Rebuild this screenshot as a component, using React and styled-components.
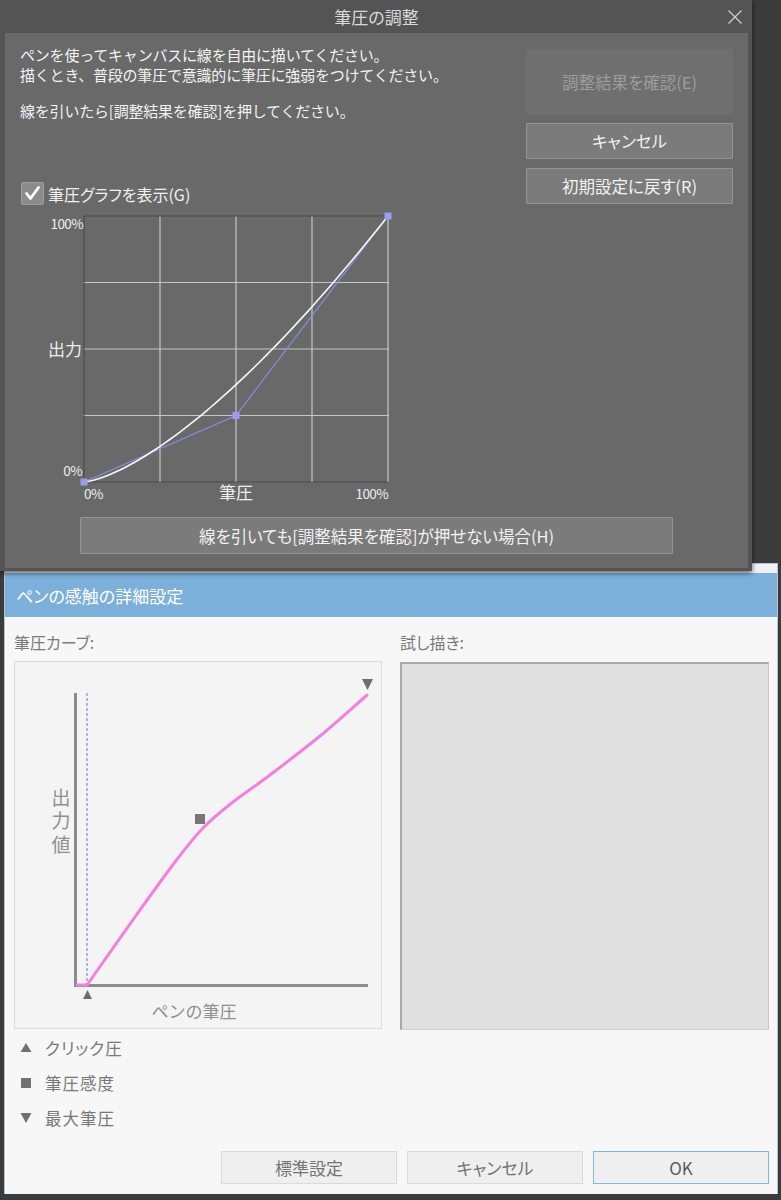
import React from "react";
import styled, { createGlobalStyle } from "styled-components";

const GlobalStyle = createGlobalStyle`
  html, body { margin: 0; padding: 0; background: #3b3b3b; }
  body { font-family: "Noto Sans CJK JP", "Noto Sans", sans-serif; }
  * { box-sizing: border-box; }
`;

const Desktop = styled.div`
  position: relative;
  width: 781px;
  height: 1200px;
  overflow: hidden;
  background: #3b3b3b;
  font-family: "Noto Sans CJK JP", "Noto Sans", sans-serif;
`;

/* ---------- dark "筆圧の調整" dialog ---------- */

const AdjustDialog = styled.section`
  position: absolute;
  left: 0;
  top: 0;
  z-index: 2;
  width: 752px;
  height: 571px;
  display: flex;
  flex-direction: column;
  padding: 0 4px 3px 5px;
  background: #545454;
  box-shadow: 0 2px 5px rgba(0, 0, 0, 0.6);
`;

const DarkTitleBar = styled.header`
  height: 33px;
  flex: none;
  display: grid;
  grid-template-columns: 1fr auto 1fr;
  align-items: center;
  color: #d9d9d9;
  font-size: 17px;
  font-feature-settings: "palt";
`;

const TitleText = styled.span`
  grid-column: 2;
`;

const CloseButton = styled.span`
  grid-column: 3;
  justify-self: end;
  margin-right: 5px;
  width: 16px;
  height: 16px;
  display: flex;
`;

const DarkBody = styled.div`
  flex: 1;
  background: #696969;
  display: grid;
  grid-template-columns: 1fr 207px;
  padding: 12px 15px 14px 15px;
`;

const LeftColumn = styled.div`
  display: flex;
  flex-direction: column;
`;

const Instructions = styled.div`
  color: #f3f3f3;
  font-size: 15px;
  line-height: 20px;
  letter-spacing: -0.2px;
  p { margin: 0; }
  p + p { margin-top: 16px; }
`;

const CheckRow = styled.label`
  margin-top: 61px;
  display: flex;
  align-items: center;
  gap: 4px;
  height: 23px;
  color: #f0f0f0;
  font-size: 16px;
  font-feature-settings: "palt";
`;

const CheckBox = styled.span`
  width: 23px;
  height: 23px;
  margin-left: 1px;
  border-radius: 2px;
  background: #8b8b8b;
  border: 1px solid #a0a0a0;
  display: flex;
  align-items: center;
  justify-content: center;
`;

const GraphSvg = styled.svg`
  display: block;
  margin-top: 5px;
  font-family: "Noto Sans CJK JP", "Noto Sans", sans-serif;
`;

const RightColumn = styled.div`
  display: flex;
  flex-direction: column;
  gap: 9px;
  padding-top: 4px;
`;

const DarkButton = styled.button`
  height: ${(p) => p.$h || 36}px;
  width: ${(p) => (p.$w ? `${p.$w}px` : "100%")};
  border-radius: 1px;
  border: 1px solid ${(p) => (p.disabled ? "#6f6f6f" : "#959595")};
  background: ${(p) => (p.disabled ? "#6f6f6f" : "#7b7b7b")};
  color: ${(p) => (p.disabled ? "#9d9d9d" : "#f2f2f2")};
  font-family: inherit;
  font-size: 16.5px;
  font-feature-settings: "palt";
  padding: 0;
`;

const WideRow = styled.div`
  grid-column: 1 / -1;
  display: flex;
  justify-content: center;
  margin-top: 12px;
`;

/* ---------- light "ペンの感触の詳細設定" window ---------- */

const DetailWindow = styled.section`
  position: absolute;
  left: 4px;
  top: 563px;
  z-index: 1;
  width: 774px;
  height: 631px;
  display: flex;
  flex-direction: column;
  padding-top: 9px;
  background: #eef2f6;
  border: 1px solid #b3c3d3;
`;

const LightTitleBar = styled.header`
  height: 44px;
  flex: none;
  display: flex;
  align-items: center;
  padding-left: 11px;
  background: #7cb0da;
  color: #ffffff;
  font-size: 17px;
  font-feature-settings: "palt";
`;

const LightBody = styled.div`
  flex: 1;
  background: #f7f7f7;
  display: grid;
  grid-template-columns: 368px 369px;
  column-gap: 18px;
  padding: 15px 8px 10px 9px;
  align-content: start;
`;

const SectionLabel = styled.div`
  height: 20px;
  line-height: 20px;
  margin-bottom: 9px;
  color: #7a7a7a;
  font-size: 16px;
  font-feature-settings: "palt";
`;

const CurvePanel = styled.div`
  width: 368px;
  height: 368px;
  border: 1px solid #dcdcdc;
  background: #f4f4f4;
`;

const CurveSvg = styled.svg`
  display: block;
  font-family: "Noto Sans CJK JP", "Noto Sans", sans-serif;
`;

const VerticalLabel = styled.text`
  writing-mode: vertical-rl;
  letter-spacing: 4.5px;
`;

const TrialPanel = styled.div`
  width: 369px;
  height: 368px;
  margin-top: 1px;
  background: #e0e0e0;
  border-style: solid;
  border-width: 2px 1px 1px 2px;
  border-color: #a9a9a9 #c8c8c8 #d3d3d3 #a9a9a9;
`;

const Legend = styled.ul`
  grid-column: 1 / -1;
  list-style: none;
  margin: 0;
  padding: 0;
`;

const LegendItem = styled.li`
  height: 35px;
  display: flex;
  align-items: center;
  gap: 13px;
  padding-left: 6px;
  color: #777777;
  font-size: 16.5px;
  letter-spacing: 1px;
  font-feature-settings: "palt";
`;

const LegendIcon = styled.svg`
  flex: none;
  display: block;
`;

const ButtonBar = styled.div`
  grid-column: 1 / -1;
  margin-top: 16px;
  display: flex;
  justify-content: flex-end;
  gap: 10px;
`;

const LightButton = styled.button`
  width: 176px;
  height: 33px;
  padding: 0;
  border: 1px solid ${(p) => (p.$primary ? "#84b5e4" : "#dadada")};
  background: #efefef;
  color: ${(p) => (p.$primary ? "#5c5c5c" : "#737373")};
  font-family: inherit;
  font-size: 17px;
  font-feature-settings: "palt";
`;

/* ---------- drawings ---------- */

const CloseIcon = () => (
  <svg width="16" height="16" viewBox="0 0 16 16">
    <path d="M1.5 1.5 L14.5 14.5 M14.5 1.5 L1.5 14.5" stroke="#cdcdcd" strokeWidth="1.3" fill="none" />
  </svg>
);

const CheckMark = () => (
  <svg width="19" height="19" viewBox="0 0 19 19">
    <polyline points="3.5,9.5 7.5,14.5 15.5,3.5" stroke="#ffffff" strokeWidth="2.8" fill="none" strokeLinecap="round" strokeLinejoin="round" />
  </svg>
);

// pressure graph of the adjustment dialog
const PX0 = 64;
const PX1 = 368;
const PY0 = 6;
const PY1 = 272;
const PW = PX1 - PX0;
const PH = PY1 - PY0;

const whiteCurve = Array.from({ length: 61 }, (_, i) => {
  const t = i / 60;
  const v = Math.pow(t, 1.45);
  return `${(PX0 + t * PW).toFixed(2)},${(PY1 - v * PH).toFixed(2)}`;
}).join(" ");

const controlPoints = [
  [PX0, PY1],
  [PX0 + PW / 2, PY0 + (PH * 3) / 4],
  [PX1, PY0],
];

const PressureGraph = () => {
  const gx = [1, 2, 3].map((k) => PX0 + (PW * k) / 4);
  const gy = [1, 2, 3].map((k) => PY0 + (PH * k) / 4);
  return (
    <GraphSvg width="380" height="295" viewBox="0 0 380 295">
      {gx.map((x) => (
        <line key={`v${x}`} x1={x} y1={PY0} x2={x} y2={PY1} stroke="#c6c6c6" strokeWidth="1.2" />
      ))}
      {gy.map((y) => (
        <line key={`h${y}`} x1={PX0 - 1} y1={y} x2={PX1 + 1} y2={y} stroke="#c6c6c6" strokeWidth="1.2" />
      ))}
      <line x1={PX1} y1={PY0} x2={PX1} y2={PY1} stroke="#c6c6c6" strokeWidth="1.2" />
      <polyline points={`${PX1},${PY0} ${PX0},${PY0} ${PX0},${PY1} ${PX1},${PY1}`} stroke="#4c4c4c" strokeWidth="1.2" fill="none" />
      <polyline points={controlPoints.map((p) => p.join(",")).join(" ")} stroke="#8c8ce2" strokeWidth="1.2" fill="none" />
      <polyline points={whiteCurve} stroke="#f7f7f7" strokeWidth="1.6" fill="none" />
      {controlPoints.map(([x, y]) => (
        <rect key={`c${x}`} x={x - 3.5} y={y - 3.5} width="7" height="7" fill="#9c9cf0" />
      ))}
      <g fill="#ededed">
        <text x="63" y="19" fontSize="13.5" textAnchor="end" letterSpacing="-0.6">100%</text>
        <text x="62" y="146" fontSize="17" textAnchor="end">出力</text>
        <text x="62" y="266" fontSize="13.5" textAnchor="end" letterSpacing="-0.6">0%</text>
        <text x="64" y="289" fontSize="13.5" letterSpacing="-0.6">0%</text>
        <text x="216" y="289" fontSize="17" textAnchor="middle">筆圧</text>
        <text x="368" y="289" fontSize="13.5" textAnchor="end" letterSpacing="-0.6">100%</text>
      </g>
    </GraphSvg>
  );
};

// smooth path through points (Catmull-Rom converted to cubic segments)
const smoothPath = (pts) => {
  let d = `M${pts[0][0]},${pts[0][1]}`;
  for (let i = 0; i < pts.length - 1; i++) {
    const p0 = pts[i - 1] || pts[i];
    const p1 = pts[i];
    const p2 = pts[i + 1];
    const p3 = pts[i + 2] || p2;
    const c1 = [p1[0] + (p2[0] - p0[0]) / 6, p1[1] + (p2[1] - p0[1]) / 6];
    const c2 = [p2[0] - (p3[0] - p1[0]) / 6, p2[1] - (p3[1] - p1[1]) / 6];
    d += ` C${c1[0].toFixed(1)},${c1[1].toFixed(1)} ${c2[0].toFixed(1)},${c2[1].toFixed(1)} ${p2[0]},${p2[1]}`;
  }
  return d;
};

const pinkCurve = smoothPath([
  [72, 323],
  [120, 255],
  [160, 200],
  [188, 166],
  [218, 140],
  [255, 113],
  [305, 74],
  [352, 33],
]);

// pen pressure curve of the detail window
const PenCurve = () => (
  <CurveSvg width="366" height="366" viewBox="0 0 366 366">
    <line x1="60.5" y1="31" x2="60.5" y2="324" stroke="#8d8d8d" strokeWidth="3" />
    <line x1="59" y1="323.5" x2="353" y2="323.5" stroke="#8d8d8d" strokeWidth="3" />
    <line x1="72" y1="31" x2="72" y2="322" stroke="#6f6ff2" strokeWidth="1" strokeDasharray="3 2" />
    <line x1="62" y1="323" x2="72" y2="323" stroke="#f47fdf" strokeWidth="3" strokeLinecap="round" />
    <path d={pinkCurve} stroke="#f47fdf" strokeWidth="3" fill="none" strokeLinecap="round" strokeLinejoin="round" />
    <rect x="180" y="152" width="10" height="10" fill="#767676" />
    <polygon points="68,337 77,337 72.5,328" fill="#6e6e6e" />
    <polygon points="347,17 358,17 352.5,28" fill="#6e6e6e" />
    <g fill="#8f8f8f">
      <VerticalLabel x="46" y="126" fontSize="19">出力値</VerticalLabel>
      <text x="179" y="356" fontSize="17" textAnchor="middle">ペンの筆圧</text>
    </g>
  </CurveSvg>
);

const markerShapes = {
  up: <polygon points="0.5,10 11.5,10 6,1" fill="#717171" />,
  square: <rect x="1" y="1" width="10" height="10" fill="#717171" />,
  down: <polygon points="0.5,1 11.5,1 6,11" fill="#717171" />,
};

const legendItems = [
  { shape: "up", label: "クリック圧" },
  { shape: "square", label: "筆圧感度" },
  { shape: "down", label: "最大筆圧" },
];

export default function App() {
  return (
    <Desktop>
      <GlobalStyle />

      <AdjustDialog>
        <DarkTitleBar>
          <TitleText>筆圧の調整</TitleText>
          <CloseButton>
            <CloseIcon />
          </CloseButton>
        </DarkTitleBar>
        <DarkBody>
          <LeftColumn>
            <Instructions>
              <p>
                ペンを使ってキャンバスに線を自由に描いてください。
                <br />
                描くとき、普段の筆圧で意識的に筆圧に強弱をつけてください。
              </p>
              <p>線を引いたら[調整結果を確認]を押してください。</p>
            </Instructions>
            <CheckRow>
              <CheckBox>
                <CheckMark />
              </CheckBox>
              筆圧グラフを表示(G)
            </CheckRow>
            <PressureGraph />
          </LeftColumn>
          <RightColumn>
            <DarkButton $h={65} disabled>
              調整結果を確認(E)
            </DarkButton>
            <DarkButton>キャンセル</DarkButton>
            <DarkButton>初期設定に戻す(R)</DarkButton>
          </RightColumn>
          <WideRow>
            <DarkButton $h={37} $w={593}>
              線を引いても[調整結果を確認]が押せない場合(H)
            </DarkButton>
          </WideRow>
        </DarkBody>
      </AdjustDialog>

      <DetailWindow>
        <LightTitleBar>ペンの感触の詳細設定</LightTitleBar>
        <LightBody>
          <SectionLabel>筆圧カーブ:</SectionLabel>
          <SectionLabel>試し描き:</SectionLabel>
          <CurvePanel>
            <PenCurve />
          </CurvePanel>
          <TrialPanel />
          <Legend>
            {legendItems.map((item) => (
              <LegendItem key={item.label}>
                <LegendIcon width="12" height="12" viewBox="0 0 12 12">
                  {markerShapes[item.shape]}
                </LegendIcon>
                {item.label}
              </LegendItem>
            ))}
          </Legend>
          <ButtonBar>
            <LightButton>標準設定</LightButton>
            <LightButton>キャンセル</LightButton>
            <LightButton $primary>OK</LightButton>
          </ButtonBar>
        </LightBody>
      </DetailWindow>
    </Desktop>
  );
}
